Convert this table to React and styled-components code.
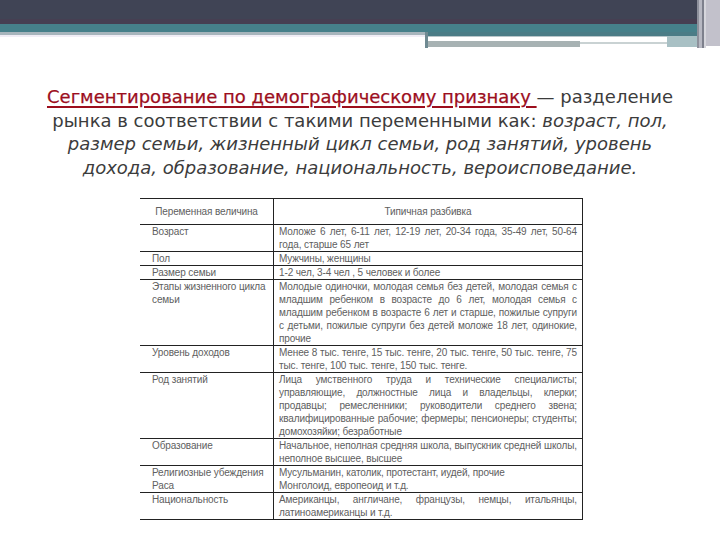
import * as React from "react"
import styled, { createGlobalStyle } from "styled-components"

const Global = createGlobalStyle`
  html, body {
    margin: 0;
    padding: 0;
    background: #ffffff;
  }
`

const Page = styled.div`
  width: 720px;
  height: 540px;
  overflow: hidden;
  background: #ffffff;
  display: flex;
  flex-direction: column;
  align-items: center;
`

const Banner = styled.svg`
  display: block;
  width: 720px;
  height: 50px;
  flex-shrink: 0;
`

const Title = styled.div`
  margin-top: 35px;
  width: 700px;
  text-align: center;
  font-family: "DejaVu Sans", sans-serif;
  font-size: 18px;
  line-height: 23.5px;
  color: #3c3c3c;
  letter-spacing: 0;
`

const Term = styled.span`
  color: #9c0e1d;
  text-decoration: underline;
  text-decoration-color: #9c0e1d;
  text-decoration-thickness: 1.5px;
  text-underline-offset: 3px;
  -webkit-text-stroke: 0.25px #9c0e1d;
`

const Soft = styled.span`
  font-style: italic;
`

const Table = styled.table`
  align-self: flex-start;
  margin: 19px 0 0 140px;
  width: 443px;
  border-collapse: collapse;
  font-family: "Liberation Sans", Arial, sans-serif;
  font-size: 10px;
  letter-spacing: -0.12px;
  line-height: 13px;
  color: #606060;
`

const Head = styled.th`
  font-weight: normal;
  text-align: center;
  height: 25px;
  padding: 0;
  border-top: 1px solid #222;
  border-bottom: 1px solid #222;
  border-left: ${p => (p.$first ? "none" : "1px solid #222")};
  border-right: ${p => (p.$first ? "none" : "1px solid #222")};
  width: ${p => (p.$first ? "133px" : "auto")};
`

const Cell = styled.td`
  vertical-align: top;
  padding: 0 5px 0 ${p => (p.$first ? "12px" : "5px")};
  border-bottom: 1px solid #222;
  border-left: ${p => (p.$first ? "none" : "1px solid #222")};
  border-right: ${p => (p.$first ? "none" : "1px solid #222")};
  text-align: ${p => (p.$first ? "left" : "justify")};
`

const rows = [
  ["Возраст", "Моложе 6 лет, 6-11 лет, 12-19 лет, 20-34 года, 35-49 лет, 50-64 года, старше 65 лет"],
  ["Пол", "Мужчины, женщины"],
  ["Размер семьи", "1-2 чел, 3-4 чел , 5 человек и более"],
  [
    "Этапы жизненного цикла семьи",
    "Молодые одиночки, молодая семья без детей, молодая семья с младшим ребенком в возрасте до 6 лет, молодая семья с младшим ребенком в возрасте 6 лет и старше, пожилые супруги с детьми, пожилые супруги без детей моложе 18 лет, одинокие, прочие",
  ],
  [
    "Уровень доходов",
    "Менее 8 тыс. тенге, 15 тыс. тенге, 20 тыс. тенге, 50 тыс. тенге, 75 тыс. тенге, 100 тыс. тенге, 150 тыс. тенге.",
  ],
  [
    "Род занятий",
    "Лица умственного труда и технические специалисты; управляющие, должностные лица и владельцы, клерки; продавцы; ремесленники; руководители среднего звена; квалифицированные рабочие; фермеры; пенсионеры; студенты; домохозяйки; безработные",
  ],
  ["Образование", "Начальное, неполная средняя школа, выпускник средней школы, неполное высшее, высшее"],
  [
    ["Религиозные убеждения", "Раса"],
    ["Мусульманин, католик, протестант, иудей, прочие", "Монголоид, европеоид и т.д."],
  ],
  ["Национальность", "Американцы, англичане, французы, немцы, итальянцы, латиноамериканцы и т.д."],
]

const Lines = ({ value }) =>
  Array.isArray(value)
    ? value.map((v, i) => <div key={i}>{v}</div>)
    : value

const App = () => {
  return (
    <Page>
      <Global />
      <Banner viewBox="0 0 720 50">
        <rect x="0" y="0" width="720" height="19" fill="#404455" />
        <rect x="0" y="19" width="720" height="5" fill="#463f52" />
        <rect x="0" y="24" width="720" height="8" fill="#46808a" />
        <rect x="0" y="32" width="425" height="3" fill="#a7b5bc" />
        <rect x="0" y="35" width="425" height="2" fill="#f1eef6" />
        <rect x="425" y="32" width="275" height="4" fill="#4b7c86" />
        <rect x="425" y="36" width="275" height="1" fill="#b9c6ca" />
        <rect x="427" y="41" width="153" height="6" fill="#a7b2b3" />
        <rect x="580" y="42" width="87" height="2" fill="#c9d2d3" />
        <rect x="667" y="36" width="33" height="11" fill="#a8c0c4" />
        <rect x="425" y="32" width="3" height="16" fill="#6f8a92" />
        <rect x="697" y="0" width="2" height="48" fill="#8e919c" />
        <rect x="699" y="0" width="3" height="48" fill="#b7b8c2" />
        <rect x="702" y="0" width="2" height="48" fill="#7d808c" />
        <rect x="704" y="0" width="2" height="48" fill="#d6d6dc" />
        <rect x="706" y="0" width="14" height="46" fill="#c2c1cb" />
      </Banner>
      <Title>
        <Term>Сегментирование по демографическому признаку </Term> — разделение
        <br />
        рынка в соответствии с такими переменными как: <Soft>возраст, пол,</Soft>
        <br />
        <Soft>размер семьи, жизненный цикл семьи, род занятий, уровень</Soft>
        <br />
        <Soft>дохода, образование, национальность, вероисповедание.</Soft>
      </Title>
      <Table>
        <thead>
          <tr>
            <Head $first>Переменная величина</Head>
            <Head>Типичная разбивка</Head>
          </tr>
        </thead>
        <tbody>
          {rows.map(([name, value], i) => (
            <tr key={i}>
              <Cell $first>
                <Lines value={name} />
              </Cell>
              <Cell>
                <Lines value={value} />
              </Cell>
            </tr>
          ))}
        </tbody>
      </Table>
    </Page>
  )
}

export default App
